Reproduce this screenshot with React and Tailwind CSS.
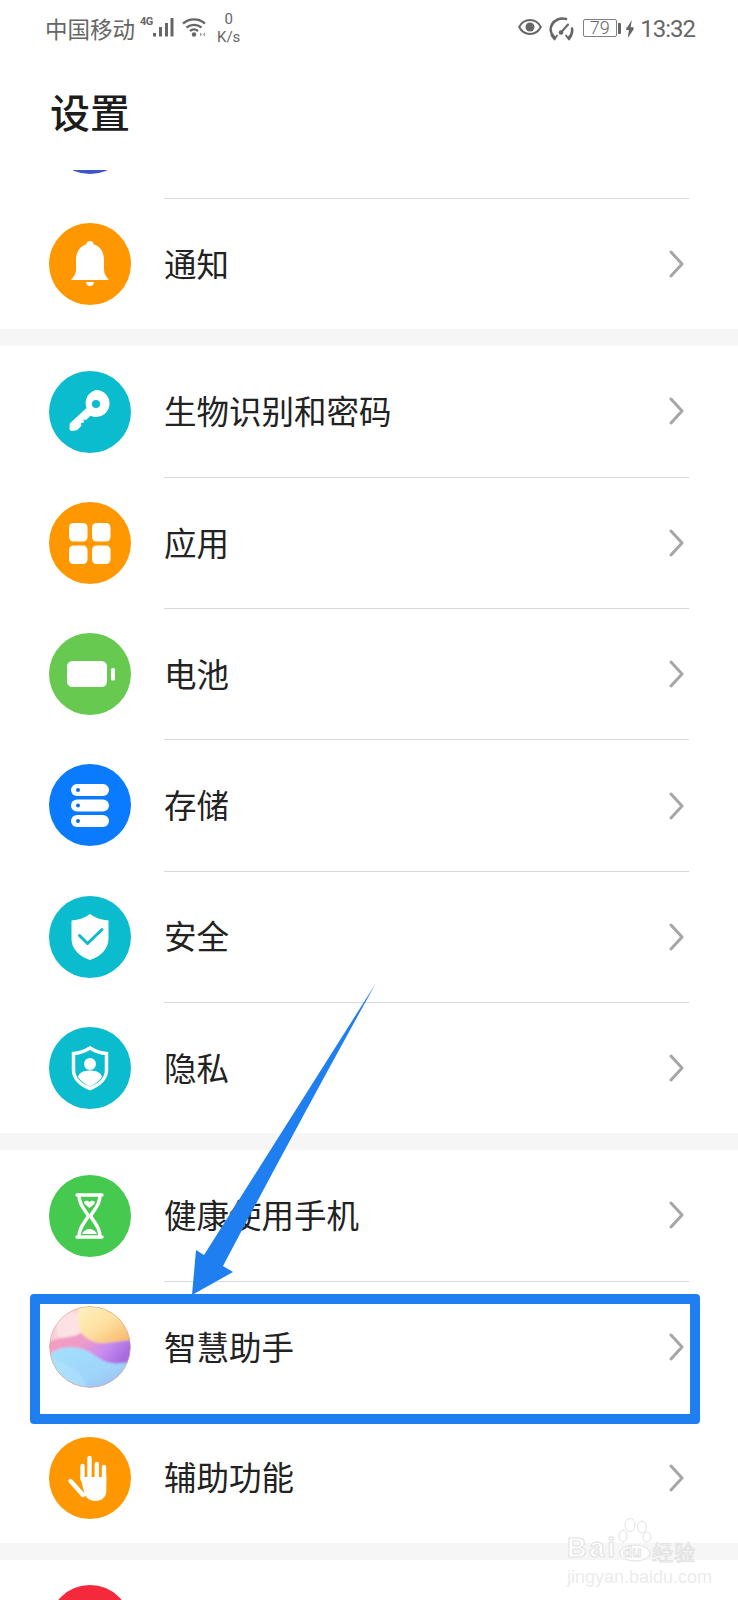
import React from "react";

const BellIcon = () => (
  <svg viewBox="0 0 82 82" className="w-full h-full" fill="#fff">
    <path d="M41 18c-2.200 0-3.600 1.500-3.600 3.200C31 23 27 29 27 37v9c0 5-2.400 8-5 11h38c-2.600-3-5-6-5-11v-9c0-8-4-14-10.400-15.800C44.600 19.500 43.200 18 41 18z" />
    <path d="M37 59h8c0 2.400-1.800 4-4 4s-4-1.600-4-4z" />
  </svg>
);

const KeyIcon = () => (
  <svg viewBox="0 0 82 82" className="w-full h-full" fill="#fff">
    <path
      fillRule="evenodd"
      d="M47 19a13.500 13.500 0 1 1-5.500 25.800L37 49l-2.500-.5.500 3-3 .5.300 3-4.300 4.300-6 .7-1.500-1.500.2-6L37.500 37A13.500 13.500 0 0 1 47 19zm0 10a4 4 0 1 0 0 8 4 4 0 0 0 0-8z"
    />
  </svg>
);

const AppsIcon = () => (
  <svg viewBox="0 0 82 82" className="w-full h-full" fill="#fff">
    <rect x="20" y="21" width="18.500" height="18.500" rx="4.500" />
    <rect x="43" y="21" width="18.500" height="18.500" rx="4.500" />
    <rect x="20" y="43.500" width="18.500" height="18.500" rx="4.500" />
    <rect x="43" y="43.500" width="18.500" height="18.500" rx="4.500" />
  </svg>
);

const BatteryIcon = () => (
  <svg viewBox="0 0 82 82" className="w-full h-full" fill="#fff">
    <rect x="18" y="28" width="40" height="26" rx="5.500" />
    <rect x="62" y="35" width="4" height="12.500" rx="1.500" />
  </svg>
);

const StorageIcon = () => (
  <svg viewBox="0 0 82 82" className="w-full h-full">
    {[20, 35.5, 51].map((y) => (
      <g key={y}>
        <rect x="22" y={y} width="38" height="12" rx="6" fill="#fff" />
        <circle cx="29" cy={y + 6} r="2" fill="#0a72e8" />
      </g>
    ))}
  </svg>
);

const ShieldIcon = () => (
  <svg viewBox="0 0 82 82" className="w-full h-full">
    <path
      d="M41 18c5 3.500 11 6 18.500 6.500V43c0 10-8 17.500-18.500 21-10.500-3.500-18.500-11-18.500-21V24.500C30 24 36 21.500 41 18z"
      fill="#fff"
    />
    <path d="M30.500 39.500l8 8 14.500-14" fill="none" stroke="#0abccd" strokeWidth="3" strokeLinecap="round" strokeLinejoin="round" />
  </svg>
);

const PrivacyIcon = () => (
  <svg viewBox="0 0 82 82" className="w-full h-full">
    <path
      d="M41 21c5 3 10 5 16.500 5.500V43c0 8.500-7 15-16.500 18.500C31.500 58 24.500 51.500 24.500 43V26.500C31 26 36 24 41 21z"
      fill="none"
      stroke="#fff"
      strokeWidth="3.500"
    />
    <circle cx="41" cy="37" r="6" fill="#fff" />
    <path d="M29 50c1-4.500 6-6.500 12-6.500S52 45.500 53 50c-2.500 4-6.500 7-12 9.500C35.500 57 31.500 54 29 50z" fill="#fff" />
  </svg>
);

const HourglassIcon = () => (
  <svg viewBox="0 0 82 82" className="w-full h-full" fill="none" stroke="#fff" strokeWidth="3.500" strokeLinecap="round" strokeLinejoin="round">
    <path d="M28 20h25M28 62h25" />
    <path d="M30 20c0 9 5 14 9.500 21C35 48 30 53 30 62M51 20c0 9-5 14-9.500 21C46 48 51 53 51 62" />
    <path d="M35 27c2-2 4-1 5.500 0 1.500-1 3.500-2 5.500 0 0 2-3 4-5.500 6-2.500-2-5.500-4-5.500-6z" fill="#fff" stroke="none" />
    <path d="M33 59c1-3 5-5 7.500-5s6.500 2 7.500 5z" fill="#fff" stroke="none" />
  </svg>
);

const AssistantIcon = () => (
  <svg viewBox="0 0 82 82" className="w-full h-full">
    <defs>
      <clipPath id="orb">
        <circle cx="41" cy="41" r="40.500" />
      </clipPath>
      <filter id="soft" x="-10%" y="-10%" width="120%" height="120%">
        <feGaussianBlur stdDeviation="1" />
      </filter>
      <linearGradient id="orbPeach" x1="0" y1="0" x2="1" y2="1">
        <stop offset="0" stopColor="#fff3c4" />
        <stop offset="0.500" stopColor="#fde0a0" />
        <stop offset="1" stopColor="#f8ae60" />
      </linearGradient>
      <linearGradient id="orbMid" x1="0" y1="0" x2="1" y2="0.300">
        <stop offset="0" stopColor="#f5a0c0" />
        <stop offset="0.450" stopColor="#ee9cc8" />
        <stop offset="0.750" stopColor="#c88cf0" />
        <stop offset="1" stopColor="#a86ce0" />
      </linearGradient>
      <linearGradient id="orbBlue" x1="0" y1="0" x2="1" y2="1">
        <stop offset="0" stopColor="#a4e2fc" />
        <stop offset="0.600" stopColor="#9ed4fa" />
        <stop offset="1" stopColor="#9ab0f0" />
      </linearGradient>
    </defs>
    <g clipPath="url(#orb)">
      <rect width="82" height="82" fill="#fad0d8" />
      <g filter="url(#soft)">
        <circle cx="22" cy="21" r="15" fill="#fde2e4" />
        <path d="M-4 37C4 34 8 33 12 32 20 31 27 30 32 27 40 34 60 38 86 33V60H-4z" fill="url(#orbMid)" />
        <path d="M29-4C29 10 29 20 32 26 38 34 46 38 56 37 66 36 74 35 86 33V-4z" fill="url(#orbPeach)" />
        <path d="M-4 51C5 45 10 42 15 42 20 41 25 41 29 42 36 43 41 46 45 49 51 53 56 56 62 57 68 58 74 57 86 55V86H-4z" fill="url(#orbBlue)" />
        <path d="M-4 50C12 58 34 58 38 86H-4z" fill="#b8ecfc" opacity="0.400" />
      </g>
    </g>
    <circle cx="41" cy="41" r="40.500" fill="none" stroke="#d9a88c" strokeWidth="0.800" />
  </svg>
);

const HandIcon = () => (
  <svg viewBox="0 0 82 82" className="w-full h-full">
    <g stroke="#fff" strokeWidth="4.400" strokeLinecap="round">
      <path d="M33.500 42V29M40.500 42V21M47.800 42V27M55 46V30M21.500 44L34 58" />
    </g>
    <path d="M31.300 40h26v14c0 6-4.500 10-11 10-5 0-8.500-3-10.500-6z" fill="#fff" />
  </svg>
);

const Chevron = () => (
  <svg width="15" height="28" viewBox="0 0 15 28" fill="none" stroke="#a6a6a6" strokeWidth="3" strokeLinecap="round" strokeLinejoin="round">
    <path d="M2 2l11 12L2 26" />
  </svg>
);

const Row = ({ label, color, icon, divider = true }) => (
  <div className="flex h-[131.2px] pl-[49px]">
    <div
      className={`w-[82px] h-[82px] rounded-full shrink-0 mt-[25px] overflow-hidden ${color}`}
    >
      {icon}
    </div>
    <div
      className={`flex flex-1 items-center justify-between ml-[33px] mr-[49px] pr-[5px] ${
        divider ? "border-t border-[#d9d9d9]" : ""
      }`}
    >
      <span className="text-[32.5px] leading-none text-[#222] mb-[2px]">{label}</span>
      <Chevron />
    </div>
  </div>
);

const Gap = () => <div className="h-[16.700px] bg-[#f6f6f6]" />;

const StatusBar = () => (
  <div className="flex justify-between items-start h-[58px] pl-[45px] pr-[43px] text-[#666]">
    <div className="flex items-start">
      <span className="text-[22.500px] leading-none mt-[17px]">中国移动</span>
      <span className="w-[12px] ml-[5px] text-[11px] font-bold leading-none mt-[16px] [font-family:Roboto] tracking-[-0.5px]">4G</span>
      <svg width="21" height="19" viewBox="0 0 21 19" className="mt-[18px] ml-[1px]" fill="#666">
        <rect x="0" y="15" width="3" height="3.500" />
        <rect x="6" y="9" width="3" height="9.500" />
        <rect x="12" y="5" width="3" height="13.500" />
        <rect x="17.500" y="0" width="3" height="18.500" />
      </svg>
      <svg width="24" height="19" viewBox="0 0 24 19" className="mt-[18px] ml-[8px]" fill="none" stroke="#666" strokeWidth="2.300">
        <path d="M1 5.500c6.500-5.500 15.500-5.500 22 0M4.500 9.500c4.500-3.500 10.500-3.500 15 0M8 13c2.500-2 5.500-2 8 0" />
        <circle cx="12" cy="16.500" r="2.200" fill="#666" stroke="none" />
        <path d="M18 14.500v4l2-2zM21 16.500l2-2v4z" fill="#999" stroke="none" />
      </svg>
      <div className="flex flex-col items-center ml-[11px] mt-[12px] text-[15px] leading-[15px] [font-family:Roboto] gap-[3px]">
        <span>0</span>
        <span>K/s</span>
      </div>
    </div>
    <div className="flex items-start">
      <svg width="24" height="16" viewBox="0 0 24 16" className="mt-[19px]" fill="none" stroke="#666" strokeWidth="2">
        <path d="M1.200 8C3.500 3.500 7.500 1 12 1s8.500 2.500 10.800 7c-2.300 4.500-6.300 7-10.800 7S3.500 12.500 1.200 8z" />
        <circle cx="12" cy="8" r="4.500" fill="#666" stroke="none" />
      </svg>
      <svg width="25" height="24" viewBox="0 0 25 24" className="mt-[17px] ml-[7px]" fill="none" stroke="#666" strokeWidth="2.600" strokeLinecap="round" strokeLinejoin="round">
        <path d="M5 20C1.500 16.500.800 11.500 3 7.500 5.500 3 11 .500 17 2" />
        <path d="M23 11.500c.700 3.500-.500 6.500-3 9" />
        <path d="M12 15.500L19 7.500" strokeWidth="2" />
        <circle cx="12" cy="15.500" r="2.300" fill="#666" stroke="none" />
        <path d="M2.500 18.500L5.500 22.500 8 18.500M17 18.500l3 4 2.500-4" strokeWidth="1.800" />
      </svg>
      <div className="flex items-center mt-[19px] ml-[9px]">
        <div className="w-[34px] h-[18px] border border-[#808080] rounded-[2px] flex items-center justify-center text-[18px] leading-none font-light [font-family:Roboto]">
          79
        </div>
        <div className="w-[3px] h-[11px] bg-[#666] ml-[1.500px] rounded-r-[1px]" />
      </div>
      <svg width="8" height="18" viewBox="0 0 9 20" className="mt-[20px] ml-[5px]" fill="#666">
        <path d="M6.500 0L1.500 8H0.500l-.300 3h3L2 20l6.500-9.500V8H5.300z" />
      </svg>
      <span className="text-[24px] leading-none mt-[17px] ml-[6px] [font-family:Roboto] tracking-[-1px]">13:32</span>
    </div>
  </div>
);

const App = () => {
  return (
    <div className="relative w-[738px] h-[1600px] overflow-hidden bg-white [font-family:'Noto_Sans_CJK_SC','Noto_Sans',sans-serif]">
      <StatusBar />
      <div className="h-[112px] pl-[50px] pt-[29px]">
        <h1 className="text-[40px] leading-[48px] font-medium text-[#1c1c1c]">设置</h1>
      </div>

      {/* row scrolled under the header */}
      <div className="h-[28px] overflow-hidden pl-[49px]">
        <div className="w-[82px] h-[82px] rounded-full bg-[#3f55c8] -mt-[78px]" />
      </div>

      <Row label="通知" color="bg-[#ff9800]" icon={<BellIcon />} />
      <Gap />
      <Row label="生物识别和密码" color="bg-[#0abccd]" icon={<KeyIcon />} divider={false} />
      <Row label="应用" color="bg-[#ff9800]" icon={<AppsIcon />} />
      <Row label="电池" color="bg-[#67c94f]" icon={<BatteryIcon />} />
      <Row label="存储" color="bg-[#0a7aff]" icon={<StorageIcon />} />
      <Row label="安全" color="bg-[#0abccd]" icon={<ShieldIcon />} />
      <Row label="隐私" color="bg-[#0abccd]" icon={<PrivacyIcon />} />
      <Gap />
      <Row label="健康使用手机" color="bg-[#45c94e]" icon={<HourglassIcon />} divider={false} />
      <Row label="智慧助手" color="bg-white" icon={<AssistantIcon />} />
      <Row label="辅助功能" color="bg-[#ff9800]" icon={<HandIcon />} divider={false} />
      <Gap />
      <Row label="" color="bg-[#f5293c]" icon={null} divider={false} />

      {/* annotation drawn over the screenshot */}
      <div className="absolute left-[30px] top-[1294px] w-[670px] h-[130px] border-[10px] border-[#207ff0] rounded-[4px]" />
      <svg className="absolute left-0 top-0 pointer-events-none" width="738" height="1600" fill="#207ff0">
        <path d="M376 983L204 1255L196 1250L192 1295L233 1272L223 1266Q300 1120 376 983z" />
      </svg>

      {/* watermark */}
      <div className="absolute left-[567px] top-[1518px] w-[132px] [font-family:'Liberation_Sans',sans-serif]">
        <div className="relative h-[44px] flex items-end text-white [-webkit-text-stroke:1px_#e2e2e2] font-bold leading-none">
          <span className="text-[27px] tracking-[3px] w-[51px]">Bai</span>
          <svg width="34" height="44" viewBox="0 0 34 44" className="shrink-0" fill="#fff" stroke="#e2e2e2" strokeWidth="1">
            <ellipse cx="5" cy="18" rx="4" ry="6" />
            <ellipse cx="12" cy="7" rx="5" ry="6.500" />
            <ellipse cx="24" cy="9" rx="4.500" ry="6" />
            <ellipse cx="29" cy="19" rx="4" ry="5" />
            <ellipse cx="17" cy="35" rx="15" ry="8" />
          </svg>
          <span className="text-[21px] leading-none tracking-[1px] whitespace-nowrap font-normal [font-family:'Noto_Sans_CJK_SC']">经验</span>
          <span className="absolute left-[56px] bottom-[3px] text-[15px] leading-none">du</span>
        </div>
        <div className="text-[18px] leading-[20px] mt-[5px] text-[#ececec] whitespace-nowrap">jingyan.baidu.com</div>
      </div>
    </div>
  );
};

export default App;
